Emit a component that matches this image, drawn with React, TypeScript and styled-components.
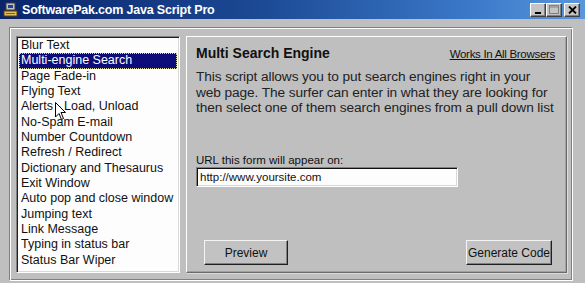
import React from "react";
import styled, { createGlobalStyle } from "styled-components";

const Global = createGlobalStyle`
  html, body { margin: 0; padding: 0; }
  body {
    width: 585px; height: 283px; overflow: hidden;
    background: #bfbfbf;
    font-family: "Liberation Sans", Arial, sans-serif;
  }
`;

const Win = styled.div`
  position: relative;
  width: 585px;
  height: 283px;
  background: #bfbfbf;
  display: flex;
  flex-direction: column;
`;

const TitleBar = styled.div`
  height: 19px;
  display: flex;
  align-items: center;
  padding: 0 3px 0 3px;
  background: linear-gradient(90deg, #0a246a 0%, #1c4a95 45%, #3a78c8 80%, #5a96dc 100%);
`;

const TitleText = styled.div`
  color: #fff;
  font-weight: bold;
  font-size: 12.5px;
  margin-left: 3px;
  flex: 1;
  letter-spacing: -0.2px;
`;

const TitleButtons = styled.div`
  display: flex;
  margin-right: 2px;
`;

const TBtn = styled.div<{ $gap?: boolean }>`
  width: 16px;
  height: 14px;
  background: #c4c4c4;
  box-sizing: border-box;
  border-top: 1px solid #fff;
  border-left: 1px solid #fff;
  border-right: 1px solid #404040;
  border-bottom: 1px solid #404040;
  box-shadow: inset -1px -1px 0 #808080;
  display: flex;
  align-items: center;
  justify-content: center;
  margin-left: ${(p) => (p.$gap ? "2px" : "0")};
`;

const Body = styled.div`
  flex: 1;
  padding: 8px 12px 2px 9px;
  display: flex;
`;

const Frame = styled.div`
  flex: 1;
  border-top: 1px solid #808080;
  border-left: 1px solid #808080;
  border-right: 1px solid #fff;
  border-bottom: 1px solid #fff;
  box-shadow: inset 1px 1px 0 #fff, inset -1px -1px 0 #808080;
  padding: 8px 5px 7px 6px;
  display: flex;
  gap: 6px;
`;

const ListBox = styled.div`
  width: 164px;
  box-sizing: border-box;
  background: #fdfdfd;
  border-top: 1px solid #808080;
  border-left: 1px solid #808080;
  border-right: 1px solid #fff;
  border-bottom: 1px solid #fff;
  box-shadow: inset 1px 1px 0 #202020, inset -1px -1px 0 #d8d8d8;
  padding: 1px 2px;
  display: flex;
  flex-direction: column;
`;

const Item = styled.div<{ $sel?: boolean }>`
  height: 15.35px;
  line-height: 15px;
  font-size: 12.5px;
  padding-left: 2px;
  white-space: nowrap;
  color: ${(p) => (p.$sel ? "#fff" : "#111")};
  background: ${(p) => (p.$sel ? "#0c0c7a" : "transparent")};
  outline: ${(p) => (p.$sel ? "1px dotted #d0d0a0" : "none")};
  outline-offset: -1px;
`;

const Panel = styled.div`
  flex: 1;
  border-top: 1px solid #fff;
  border-left: 1px solid #fff;
  border-right: 1px solid #6a6a6a;
  border-bottom: 1px solid #6a6a6a;
  box-shadow: inset -1px -1px 0 #a0a0a0, 1px 1px 0 #dcdcdc;
  padding: 8px 11px 7px 9px;
  display: flex;
  flex-direction: column;
`;

const Head = styled.div`
  display: flex;
  align-items: baseline;
  justify-content: space-between;
  height: 17px;
`;

const HeadTitle = styled.div`
  font-weight: bold;
  font-size: 14px;
  color: #111;
`;

const HeadLink = styled.div`
  font-size: 11.5px;
  color: #111;
  text-decoration: underline;
  letter-spacing: -0.3px;
`;

const Desc = styled.p`
  margin: 7px 0 0 0;
  font-size: 13.7px;
  line-height: 15.5px;
  color: #222;
  white-space: nowrap;
  letter-spacing: -0.1px;
`;

const Label = styled.div`
  margin-top: 38px;
  font-size: 11.5px;
  color: #111;
  line-height: 13px;
`;

const Input = styled.div`
  width: 262px;
  height: 20px;
  box-sizing: border-box;
  background: #fdfdfd;
  border-top: 1px solid #808080;
  border-left: 1px solid #808080;
  border-right: 1px solid #fff;
  border-bottom: 1px solid #fff;
  box-shadow: inset 1px 1px 0 #101010, inset -1px -1px 0 #d8d8d8;
  font-size: 11.5px;
  line-height: 18px;
  padding-left: 3px;
  color: #111;
`;

const ButtonRow = styled.div`
  margin-top: auto;
  display: flex;
  justify-content: space-between;
  padding: 0 3px 0 8px;
`;

const Button = styled.div<{ $w: number }>`
  width: ${(p) => p.$w}px;
  height: 25px;
  box-sizing: border-box;
  background: #c2c2c2;
  border-top: 1px solid #f4f4f4;
  border-left: 1px solid #f4f4f4;
  border-right: 1px solid #202020;
  border-bottom: 1px solid #202020;
  box-shadow: inset -1px -1px 0 #808080;
  font-size: 12px;
  color: #111;
  display: flex;
  align-items: center;
  justify-content: center;
`;

const Cursor = styled.svg`
  position: absolute;
  left: 55px;
  top: 102px;
`;

const items = [
  "Blur Text",
  "Multi-engine Search",
  "Page Fade-in",
  "Flying Text",
  "Alerts - Load, Unload",
  "No-Spam E-mail",
  "Number Countdown",
  "Refresh / Redirect",
  "Dictionary and Thesaurus",
  "Exit Window",
  "Auto pop and close window",
  "Jumping text",
  "Link Message",
  "Typing in status bar",
  "Status Bar Wiper",
];

export default function App() {
  return (
    <>
      <Global />
      <Win>
        <TitleBar>
          <svg width="16" height="16" viewBox="0 0 16 16">
            <rect x="3" y="1" width="9" height="7" fill="#c0c0c0" stroke="#404040" strokeWidth="1" />
            <rect x="5" y="3" width="5" height="3" fill="#2040a0" />
            <rect x="1" y="9" width="13" height="5" fill="#e0c060" stroke="#604000" strokeWidth="1" />
            <rect x="3" y="11" width="9" height="1" fill="#806020" />
          </svg>
          <TitleText>SoftwarePak.com Java Script Pro</TitleText>
          <TitleButtons>
            <TBtn>
              <svg width="8" height="8" viewBox="0 0 8 8">
                <rect x="1" y="6" width="6" height="2" fill="#000" />
              </svg>
            </TBtn>
            <TBtn>
              <svg width="10" height="9" viewBox="0 0 10 9">
                <rect x="0.5" y="0.5" width="9" height="8" fill="none" stroke="#808080" />
                <rect x="0.5" y="1.5" width="9" height="1" fill="#808080" />
              </svg>
            </TBtn>
            <TBtn $gap>
              <svg width="9" height="8" viewBox="0 0 9 8">
                <path d="M1 0.5 L8 7.5 M8 0.5 L1 7.5" stroke="#000" strokeWidth="1.8" />
              </svg>
            </TBtn>
          </TitleButtons>
        </TitleBar>
        <Body>
          <Frame>
            <ListBox>
              {items.map((it, i) => (
                <Item key={it} $sel={i === 1}>
                  {it}
                </Item>
              ))}
            </ListBox>
            <Panel>
              <Head>
                <HeadTitle>Multi Search Engine</HeadTitle>
                <HeadLink>Works In All Browsers</HeadLink>
              </Head>
              <Desc>
                This script allows you to put search engines right in your
                <br />
                web page. The surfer can enter in what they are looking for
                <br />
                then select one of them search engines from a pull down list
              </Desc>
              <Label>URL this form will appear on:</Label>
              <Input>http://www.yoursite.com</Input>
              <ButtonRow>
                <Button $w={84}>Preview</Button>
                <Button $w={86}>Generate Code</Button>
              </ButtonRow>
            </Panel>
          </Frame>
        </Body>
        <Cursor width="12" height="20" viewBox="0 0 12 20">
          <path d="M0.5 0.5 L0.5 15 L4 11.5 L6.5 17.5 L8.5 16.5 L6 10.5 L10.5 10.5 Z" fill="#fff" stroke="#000" strokeWidth="1" />
        </Cursor>
      </Win>
    </>
  );
}
